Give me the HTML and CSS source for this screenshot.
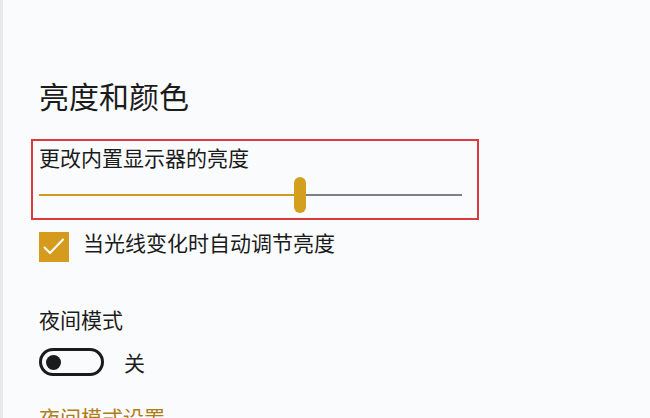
FILE: index.html
```html
<!DOCTYPE html>
<html lang="zh-CN">
<head>
  <meta charset="UTF-8" />
  <title>亮度和颜色</title>
  <meta name="viewport" content="width=device-width, initial-scale=1.0" />
  <link rel="stylesheet" href="styles.css">
</head>
<body>
  <div class="page">
    <h1 class="title">亮度和颜色</h1>

    <div class="brightness-box">
      <div class="label">更改内置显示器的亮度</div>
      <div class="slider">
        <div class="slider-fill"></div>
        <div class="slider-thumb"></div>
        <div class="slider-rest"></div>
      </div>
    </div>

    <label class="check-row">
      <span class="checkbox">
        <svg width="30" height="30" viewBox="0 0 30 30">
          <path d="M5.5 15.5 L11 21 L24 7.5" fill="none" stroke="#fff" stroke-width="2" stroke-linecap="round" stroke-linejoin="round"/>
        </svg>
      </span>
      <span class="check-label">当光线变化时自动调节亮度</span>
    </label>

    <div class="section-label">夜间模式</div>
    <div class="toggle-row">
      <div class="toggle"><span class="toggle-dot"></span></div>
      <span class="toggle-text">关</span>
    </div>

    <a class="link" href="#">夜间模式设置</a>
  </div>
</body>
</html>
```

FILE: styles.css
```css
* { box-sizing: border-box; }
html, body { height: 100%; }
body {
  margin: 0;
  background-color: #fafbfd;
  border-left: 3px solid #e8e9eb;
  font-family: 'Noto Sans CJK SC', 'Noto Sans', sans-serif;
  color: #1b1b1b;
  overflow: hidden;
}
.page { padding-left: 36px; }
.title {
  margin: 0;
  padding-top: 75px;
  font-size: 30px;
  line-height: 40px;
  font-weight: 400;
}

/* highlighted brightness group */
.brightness-box {
  width: 448px;
  margin: 24px 0 0 -8px;
  padding: 2px 0 5px 6px;
  border: 2px solid #dc3a40;
}
.label { font-size: 21px; line-height: 28px; }
.slider {
  display: flex;
  align-items: center;
  width: 423px;
  height: 36px;
  margin-top: 6px;
}
.slider-fill { width: 255px; height: 2px; background-color: #cf9b1f; }
.slider-thumb {
  width: 12px; height: 36px;
  border-radius: 6px;
  background-color: #d49f1d;
}
.slider-rest { flex: 1; height: 2px; background-color: #7d7f83; }

/* checkbox row */
.check-row {
  display: flex;
  align-items: flex-start;
  gap: 14px;
  margin-top: 12px;
}
.checkbox {
  display: block;
  width: 30px; height: 30px;
  background-color: #d49b1e;
}
.checkbox svg { display: block; }
.check-label { font-size: 21px; line-height: 24px; margin-top: -2px; }

/* night mode */
.section-label {
  margin-top: 43px;
  font-size: 21px;
  line-height: 28px;
}
.toggle-row {
  display: flex;
  align-items: center;
  gap: 20px;
  margin-top: 15px;
}
.toggle {
  display: flex;
  align-items: center;
  width: 65px; height: 28px;
  padding-left: 4px;
  border: 3px solid #1b1b1b;
  border-radius: 14px;
}
.toggle-dot {
  width: 15px; height: 15px;
  border-radius: 50%;
  background-color: #1b1b1b;
}
.toggle-text { font-size: 21px; line-height: 28px; }
.link {
  display: block;
  margin-top: 27px;
  font-size: 21px;
  line-height: 28px;
  color: #ad7e16;
  text-decoration: none;
}
```
